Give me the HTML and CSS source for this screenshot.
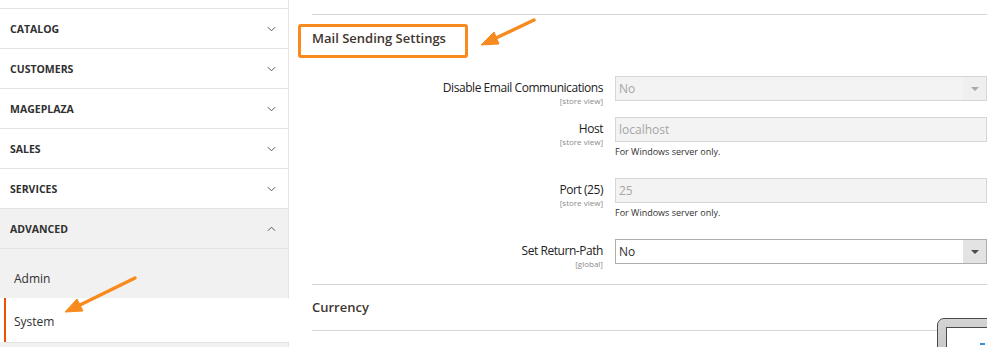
FILE: index.html
```html
<!DOCTYPE html>
<html lang="en">
<head>
    <meta charset="UTF-8">
    <meta name="viewport" content="width=device-width, initial-scale=1.0">
    <title>Configuration - Advanced - System</title>
    <link rel="stylesheet" href="styles.css">
</head>
<body>
<div class="page">

    <!-- Config tabs sidebar -->
    <aside class="sidebar">
        <ul class="nav">
            <li class="nav-item"><span>Catalog</span>
                <svg class="chev" viewBox="0 0 10 6"><polyline points="1,1 5,5 9,1"/></svg></li>
            <li class="nav-item"><span>Customers</span>
                <svg class="chev" viewBox="0 0 10 6"><polyline points="1,1 5,5 9,1"/></svg></li>
            <li class="nav-item"><span>Mageplaza</span>
                <svg class="chev" viewBox="0 0 10 6"><polyline points="1,1 5,5 9,1"/></svg></li>
            <li class="nav-item"><span>Sales</span>
                <svg class="chev" viewBox="0 0 10 6"><polyline points="1,1 5,5 9,1"/></svg></li>
            <li class="nav-item"><span>Services</span>
                <svg class="chev" viewBox="0 0 10 6"><polyline points="1,1 5,5 9,1"/></svg></li>
            <li class="nav-item open"><span>Advanced</span>
                <svg class="chev" viewBox="0 0 10 6"><polyline points="1,5 5,1 9,5"/></svg></li>
        </ul>
        <ul class="subnav">
            <li class="sub-item">Admin</li>
            <li class="sub-item active">System</li>
            <li class="sub-item"></li>
        </ul>
    </aside>

    <!-- Main config form -->
    <main class="content">
        <div class="section-title">
            Mail Sending Settings
            <span class="highlight"></span>
        </div>

        <div class="fieldset">
            <div class="field">
                <div class="field-label">
                    <span class="label-text">Disable Email Communications</span>
                    <span class="scope">[store view]</span>
                </div>
                <div class="control">
                    <div class="select disabled"><span class="value">No</span><span class="select-arrow"></span></div>
                </div>
            </div>

            <div class="field">
                <div class="field-label">
                    <span class="label-text">Host</span>
                    <span class="scope">[store view]</span>
                </div>
                <div class="control">
                    <div class="input disabled"><span class="value">localhost</span></div>
                    <p class="note">For Windows server only.</p>
                </div>
            </div>

            <div class="field">
                <div class="field-label">
                    <span class="label-text">Port (25)</span>
                    <span class="scope">[store view]</span>
                </div>
                <div class="control">
                    <div class="input disabled"><span class="value">25</span></div>
                    <p class="note">For Windows server only.</p>
                </div>
            </div>

            <div class="field">
                <div class="field-label">
                    <span class="label-text">Set Return-Path</span>
                    <span class="scope">[global]</span>
                </div>
                <div class="control">
                    <div class="select"><span class="value">No</span><span class="select-arrow"></span></div>
                </div>
            </div>
        </div>

        <div class="section-title closed">Currency</div>
    </main>

    <!-- Screenshot annotations -->
    <svg class="annotations" viewBox="0 0 987 347">
        <line x1="534" y1="20" x2="496" y2="38"/>
        <polygon points="481,45 499,44 494,32"/>
        <line x1="135" y1="278" x2="80" y2="305"/>
        <polygon points="65,312 83,311 77,299"/>
    </svg>

    <!-- Corner of another window -->
    <div class="popup">
        <div class="popup-inner"><span class="popup-dot"></span></div>
    </div>
</div>
</body>
</html>
```

FILE: styles.css
```css
/* Base */
body {
    margin: 0;
    font-family: 'Open Sans', sans-serif;
    color: #303030;
    background-color: #fff;
}

ul {
    margin: 0;
    padding: 0;
    list-style: none;
}

.page {
    position: relative;
    display: flex;
    width: 987px;
    height: 347px;
    overflow: hidden;
}

/* Sidebar */
.sidebar {
    width: 288px;
    flex-shrink: 0;
    padding-top: 8px;
    border-right: 1px solid #e3e3e3;
}

.nav {
    border-top: 1px solid #e3e3e3;
}

.nav-item {
    display: flex;
    align-items: center;
    justify-content: space-between;
    height: 39px;
    padding: 0 12px 0 10px;
    border-bottom: 1px solid #e3e3e3;
    font-size: 10.5px;
    font-weight: 700;
    text-transform: uppercase;
    color: #303030;
}

.nav-item.open {
    background-color: #f1f1f1;
}

.chev {
    width: 9px;
    height: 6px;
    fill: none;
    stroke: #555;
    stroke-width: 1.1;
}

.subnav {
    padding-top: 10px;
    background-color: #f1f1f1;
}

.sub-item {
    display: flex;
    align-items: center;
    height: 39px;
    padding-left: 14px;
    font-size: 12px;
}

.sub-item.active {
    height: 42px;
    padding-top: 2px;
    margin-left: 4px;
    margin-right: -12px;
    padding-left: 8px;
    background-color: #fff;
    border-left: 2px solid #eb5202;
    box-shadow: -4px 0 0 #fff;
}

.sub-item:last-child {
    border-top: 1px solid #e3e3e3;
    margin-left: 5px;
}

/* Content */
.content {
    flex: 1;
    min-width: 0;
    padding: 14px 0 0 23px;
}

.section-title {
    position: relative;
    border-top: 1px solid #d6d6d6;
    padding: 14px 0 29px;
    font-size: 13px;
    font-weight: 600;
    line-height: 18px;
    color: #41362f;
}

.section-title.closed {
    padding: 13px 0 14px;
    border-bottom: 1px solid #d6d6d6;
}

.highlight {
    position: absolute;
    left: -14px;
    top: 9px;
    width: 170px;
    height: 34px;
    box-sizing: border-box;
    border: 3px solid #f88a1e;
    border-radius: 3px;
}

.fieldset {
    padding-bottom: 4px;
}

.field {
    display: grid;
    grid-template-columns: 291px 1fr;
    column-gap: 12px;
    margin-bottom: 16px;
}

.field-label {
    height: 25px;
    padding-top: 4px;
    box-sizing: border-box;
    text-align: right;
}

.label-text {
    display: block;
    font-size: 12px;
    font-weight: 400;
    letter-spacing: -0.45px;
    line-height: 15px;
    color: #222;
}

.scope {
    display: block;
    font-size: 8px;
    line-height: 11px;
    color: #8a8a8a;
}

.select,
.input {
    display: flex;
    align-items: center;
    height: 25px;
    box-sizing: border-box;
    border: 1px solid #adadad;
    font-size: 12px;
    background-color: #fff;
}

.value {
    flex: 1;
    padding-left: 3px;
}

.disabled {
    border-color: #d6d6d6;
    background-color: #f3f3f3;
    color: #a6a6a6;
}

.select-arrow {
    position: relative;
    width: 23px;
    height: 100%;
    background-color: #e3e3e3;
}

.select-arrow::after {
    content: "";
    position: absolute;
    left: 8px;
    top: 10px;
    border-left: 4px solid transparent;
    border-right: 4px solid transparent;
    border-top: 4px solid #514943;
}

.disabled .select-arrow {
    background-color: #efefef;
}

.disabled .select-arrow::after {
    border-top-color: #a9a9a9;
}

.note {
    margin: 3px 0 3px;
    font-size: 9px;
    line-height: 14px;
}

/* Overlays */
.annotations {
    position: absolute;
    left: 0;
    top: 0;
    width: 987px;
    height: 347px;
    pointer-events: none;
}

.annotations line {
    stroke: #f88a1e;
    stroke-width: 3.5;
    stroke-linecap: round;
}

.annotations polygon {
    fill: #f88a1e;
    stroke: #f88a1e;
    stroke-width: 1;
    stroke-linejoin: round;
}

.popup {
    position: absolute;
    left: 937px;
    top: 318px;
    width: 70px;
    height: 50px;
    padding: 8px 0 0 8px;
    border: 1px solid #4a4a4a;
    border-radius: 7px 0 0 0;
    background: linear-gradient(#d4d4d4, #bdbdbd);
}

.popup-inner {
    position: relative;
    height: 100%;
    border: 1px solid #4a4a4a;
    background-color: #fff;
}

.popup-dot {
    position: absolute;
    left: 33px;
    top: 15px;
    width: 5px;
    height: 2px;
    background-color: #3d8fd6;
}
```
